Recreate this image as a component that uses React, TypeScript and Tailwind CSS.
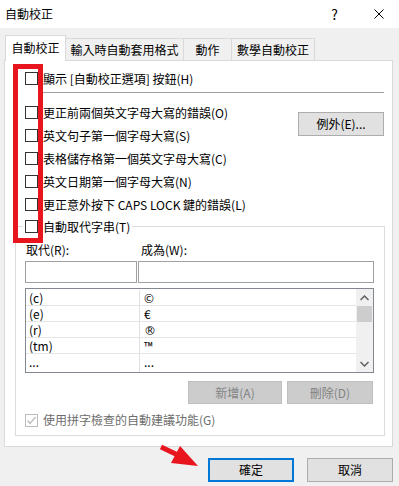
import React from "react";

function Box({ disabled, checked }: { disabled?: boolean; checked?: boolean }) {
  return (
    <span
      className={
        disabled
          ? "w-[13px] h-[13px] border border-[#bcbcbc] bg-white shrink-0 flex items-center justify-center"
          : "w-[13px] h-[13px] border border-[#333333] bg-white shrink-0 flex items-center justify-center"
      }
    >
      {checked && (
        <svg width="11" height="11" viewBox="0 0 11 11">
          <polyline points="1.5,5.5 4,8.5 9.5,2" fill="none" stroke="#bcbcbc" strokeWidth="1.4" />
        </svg>
      )}
    </span>
  );
}

function Row({ text }: { text: string }) {
  return (
    <div className="h-[23px] flex items-center">
      <Box />
      <span className="ml-[5px] whitespace-nowrap">{text}</span>
    </div>
  );
}

const rows: [string, React.ReactNode][] = [
  ["(c)", "©"],
  ["(e)", "€"],
  ["(r)", <span className="font-['DejaVu_Sans',sans-serif] text-[12px]">®</span>],
  ["(tm)", "™"],
  ["...", "..."],
];

export default function App() {
  return (
    <div className="relative w-[399px] h-[486px] overflow-hidden bg-[#f0f0f0] text-[12px] leading-[16px] text-black font-['Noto_Sans_CJK_TC','Noto_Sans',sans-serif]">
      {/* title bar */}
      <div className="h-[28px] bg-white flex items-center pl-[5px]">
        <span>自動校正</span>
        <span className="ml-auto mr-[36px] text-[14px] leading-[16px]">?</span>
        <span className="mr-[15px] flex items-center">
          <svg width="10" height="10" viewBox="0 0 10 10">
            <line x1="0.5" y1="0.5" x2="9.5" y2="9.5" stroke="#000" strokeWidth="1" />
            <line x1="9.5" y1="0.5" x2="0.5" y2="9.5" stroke="#000" strokeWidth="1" />
          </svg>
        </span>
      </div>

      {/* tabs */}
      <div className="mt-[7px] h-[25px] flex items-end pl-[5px]">
        <div className="relative z-10 -mb-px h-[26px] w-[61px] bg-white border-l border-t border-r border-[#d9d9d9] flex items-center justify-center pb-[2px]">
          自動校正
        </div>
        <div className="h-[22px] w-[118px] border-t border-r border-[#d9d9d9] flex items-center justify-center">
          輸入時自動套用格式
        </div>
        <div className="h-[22px] w-[48px] border-t border-r border-[#d9d9d9] flex items-center justify-center">
          動作
        </div>
        <div className="h-[22px] w-[83px] border-t border-r border-[#d9d9d9] flex items-center justify-center">
          數學自動校正
        </div>
      </div>

      {/* panel */}
      <div className="ml-[4px] w-[389px] h-[387px] bg-white border border-[#d9d9d9] flex flex-col">
        <div className="pt-[6px] pl-[20px] pr-[8px]">
          <Row text="顯示 [自動校正選項] 按鈕(H)" />
          <div className="mt-[2px] ml-[17px] h-px bg-[#a0a0a0]" />
          <div className="mt-[8px] flex justify-between">
            <div className="flex flex-col">
              <Row text="更正前兩個英文字母大寫的錯誤(O)" />
              <Row text="英文句子第一個字母大寫(S)" />
              <Row text="表格儲存格第一個英文字母大寫(C)" />
              <Row text="英文日期第一個字母大寫(N)" />
              <Row text="更正意外按下 CAPS LOCK 鍵的錯誤(L)" />
            </div>
            <div className="mt-[11px] w-[86px] h-[24px] bg-[#e1e1e1] border border-[#adadad] flex items-center justify-center">
              例外(E)...
            </div>
          </div>
        </div>

        {/* group box */}
        <div className="mt-[10px] ml-[10px] mr-[7px] border border-[#dcdcdc] pl-[9px] pr-[10px] pb-[7px]">
          <div className="-mt-[12px] h-[23px] flex items-center">
            <div className="-ml-[2px] px-[2px] bg-white flex items-center">
              <Box />
              <span className="ml-[5px] whitespace-nowrap">自動取代字串(T)</span>
            </div>
          </div>
          <div className="mt-[4px] h-[16px] flex">
            <span className="w-[116px] pl-[1px]">取代(R):</span>
            <span>成為(W):</span>
          </div>
          <div className="mt-[3px] flex gap-px">
            <div className="w-[112px] h-[22px] border border-[#a0a0a0] bg-white" />
            <div className="flex-1 h-[22px] border border-[#a0a0a0] bg-white" />
          </div>
          <div className="mt-[5px] h-[85px] border border-[#828790] flex bg-white">
            <div className="flex-1 pt-[1px] flex flex-col">
              {rows.map(([a, b], i) => (
                <div
                  key={i}
                  className={
                    i < 4
                      ? "h-[16px] flex border-b border-[#e5e5e5]"
                      : "h-[16px] flex"
                  }
                >
                  <div className="w-[114px] pl-[3px] border-r border-[#e0e0e0] leading-[15px]">{a}</div>
                  <div className="pl-[4px] leading-[15px]">{b}</div>
                </div>
              ))}
              <div className="flex-1 flex">
                <div className="w-[114px] border-r border-[#e0e0e0]" />
              </div>
            </div>
            <div className="w-[17px] bg-[#f0f0f0] flex flex-col">
              <div className="h-[17px] flex items-center justify-center">
                <svg width="9" height="6" viewBox="0 0 9 6">
                  <polyline points="0.5,5 4.5,1 8.5,5" fill="none" stroke="#606060" strokeWidth="1.5" />
                </svg>
              </div>
              <div className="mx-px h-[16px] bg-[#cdcdcd]" />
              <div className="flex-1" />
              <div className="h-[17px] flex items-center justify-center">
                <svg width="9" height="6" viewBox="0 0 9 6">
                  <polyline points="0.5,1 4.5,5 8.5,1" fill="none" stroke="#606060" strokeWidth="1.5" />
                </svg>
              </div>
            </div>
          </div>
          <div className="mt-[8px] flex justify-end gap-[5px] pr-[1px]">
            <div className="w-[94px] h-[23px] bg-[#cccccc] border border-[#bfbfbf] text-[#838383] flex items-center justify-center">
              新增(A)
            </div>
            <div className="w-[86px] h-[23px] bg-[#cccccc] border border-[#bfbfbf] text-[#838383] flex items-center justify-center">
              刪除(D)
            </div>
          </div>
          <div className="mt-[8px] h-[16px] flex items-center">
            <Box disabled checked />
            <span className="ml-[5px] text-[#6d6d6d] whitespace-nowrap">使用拼字檢查的自動建議功能(G)</span>
          </div>
        </div>
      </div>

      {/* bottom buttons */}
      <div className="mt-[11px] flex justify-end gap-[13px] pr-[6px]">
        <div className="w-[86px] h-[24px] bg-[#e1e1e1] border-2 border-[#0078d7] flex items-center justify-center">
          確定
        </div>
        <div className="w-[86px] h-[24px] bg-[#e1e1e1] border border-[#adadad] flex items-center justify-center">
          取消
        </div>
      </div>

      {/* annotation overlays */}
      <div className="absolute left-[13px] top-[64px] w-[30px] h-[179px] border-[5px] border-[#e8141e]" />
      <svg className="absolute left-[150px] top-[436px]" width="55" height="40" viewBox="150 436 55 40">
        <line x1="161" y1="447" x2="182" y2="457" stroke="#e8141e" strokeWidth="5" />
        <polygon points="180,446 198,466 171,463" fill="#e8141e" />
      </svg>
    </div>
  );
}
